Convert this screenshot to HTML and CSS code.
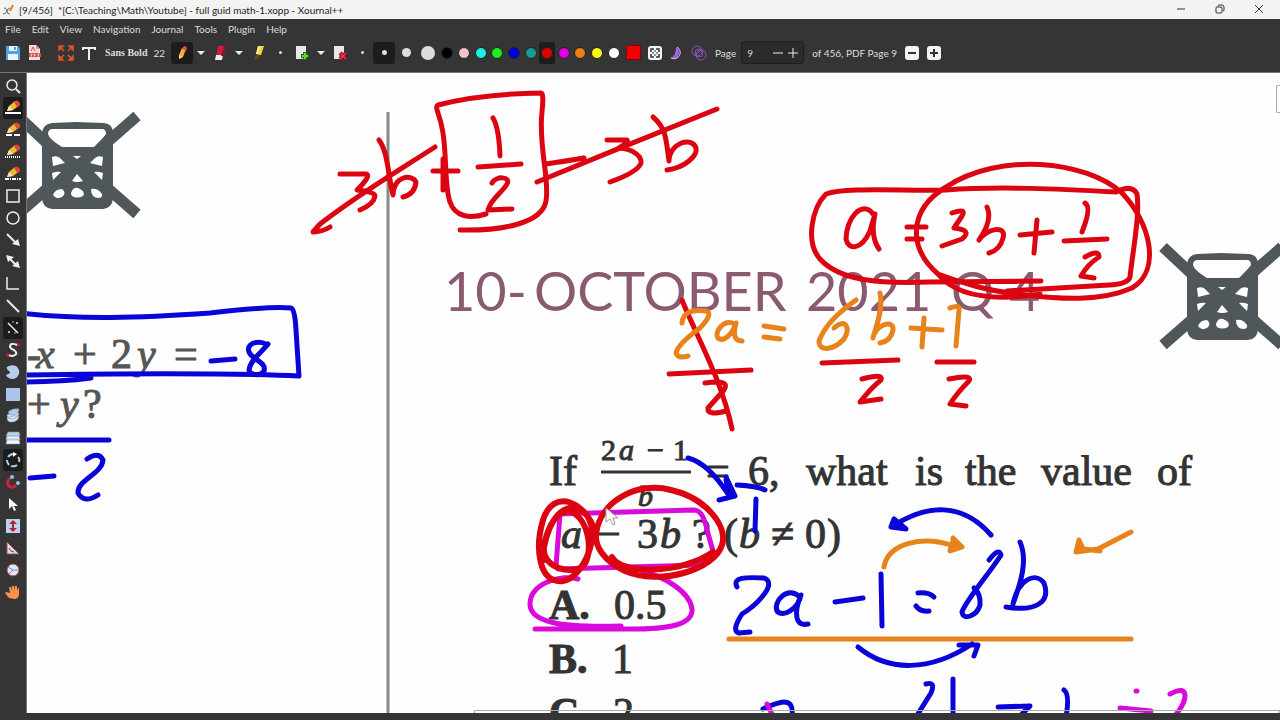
FILE: index.html
```
<!DOCTYPE html>
<html lang="en">

<head>
    <meta charset="UTF-8">
    <meta name="viewport" content="width=device-width, initial-scale=1.0">
    <title>[9/456] full guid math-1.xopp - Xournal++</title>
    <link rel="stylesheet" href="styles.css">
</head>

<body>
    <header class="titlebar">
        <svg class="app-icon" viewBox="0 0 12 12"><path d="M1 4q2-1 3 3t3 3M7 4q-2 0-3 3t-4 3" fill="none" stroke="#666"/><path d="M7 7l3-6" stroke="#f07b1c" stroke-width="2"/></svg>
        <span class="window-title">[9/456]&nbsp; *[C:\Teaching\Math\Youtube] - full guid math-1.xopp - Xournal++</span>
        <div class="window-buttons">
            <button aria-label="Minimize"><svg viewBox="0 0 10 10"><path d="M1 5h8"/></svg></button>
            <button aria-label="Restore"><svg viewBox="0 0 10 10"><rect x="1" y="3" width="6" height="6" rx="1"/><path d="M3 2q0-1 1-1h3q2 0 2 2v3q0 1-1 1"/></svg></button>
            <button aria-label="Close"><svg viewBox="0 0 10 10"><path d="M1 1l8 8M9 1L1 9"/></svg></button>
        </div>
    </header>

    <nav class="menubar">
        <button>File</button>
        <button>Edit</button>
        <button>View</button>
        <button>Navigation</button>
        <button>Journal</button>
        <button>Tools</button>
        <button>Plugin</button>
        <button>Help</button>
    </nav>

    <div class="toolbar">
        <button class="tool" aria-label="Save"><svg viewBox="0 0 16 16"><path d="M1 1h12l2 2v12H1z" fill="#4ba3ee"/><path d="M4 1h8v5H4zM3 9h10v6H3z" fill="#eef5fb"/><path d="M9 2h2v3H9z" fill="#4ba3ee"/></svg></button>
        <button class="tool" aria-label="Export PDF"><svg viewBox="0 0 16 16"><path d="M2 0h7l4 4v11H2z" fill="#f3dede"/><path d="M9 0v4h4" fill="#c99"/><path d="M2 8h12v4H2z" fill="#d8454c"/><path d="M4 12V9h1v1H4M7 9v2h1V9zM11 12V9h2M11 10h1" stroke="#fff" stroke-width=".6" fill="none"/><path d="M4 6l2-4 2 4" stroke="#d8454c" fill="none"/></svg></button>
        <button class="tool fullscreen" aria-label="Fullscreen"><svg viewBox="0 0 16 16" fill="#e0532a" stroke="#e0532a" stroke-width="1.5"><path d="M1 1h4L1 5zM15 1h-4l4 4zM1 15h4l-4-4zM15 15h-4l4-4z"/><path d="M2 2l4 4M14 2l-4 4M2 14l4-4M14 14l-4-4"/></svg></button>
        <button class="tool" aria-label="Text"><svg viewBox="0 0 16 16"><path d="M3 5V3h12v2M9 3v12" fill="none" stroke="#eee" stroke-width="2"/></svg></button>
        <button class="font-button"><b>Sans Bold</b><span>22</span></button>
        <button class="tool active" aria-label="Pen"><svg viewBox="0 0 16 16"><path d="M5 14V10l3-7 4 1-3 8z" fill="#f5b32f"/><path d="M8 4q1-3 3-3 3 1 1 5z" fill="#e34f3a"/><path d="M5 14v-4l3 2z" fill="#f6e1b4"/></svg></button>
        <button class="arrow" aria-label="Pen options"></button>
        <button class="tool" aria-label="Eraser"><svg viewBox="0 0 16 16"><path d="M6 1h8l-3 10H4z" fill="#d31d38"/><path d="M4 10h7l-1 5H3z" fill="#eee"/><path d="M12 1h2l-3 10H9z" fill="#8d1224"/></svg></button>
        <button class="arrow" aria-label="Eraser options"></button>
        <button class="tool" aria-label="Highlighter"><svg viewBox="0 0 16 16"><path d="M8 1h6l-3 9H6z" fill="#f7d63c"/><path d="M6 9l5 1-3 3-1 2H4z" fill="#5c4725"/><path d="M8 1h2L8 9H6z" fill="#fff0a0"/></svg></button>
        <button class="tool" aria-label="Separator"><i class="size size-1"></i></button>
        <button class="tool" aria-label="Insert page"><svg viewBox="0 0 16 16"><path d="M2 1h10v13H2z" fill="#e8e8e4"/><path d="M11 7v8M7 11h8" stroke="#246b16" stroke-width="4"/><path d="M11 8v6M8 11h6" stroke="#67d63a" stroke-width="2"/></svg></button>
        <button class="arrow" aria-label="Page options"></button>
        <button class="tool" aria-label="Delete page"><svg viewBox="0 0 16 16"><path d="M2 1h10v13H2z" fill="#e8e8e4"/><path d="M8 8l6 6M14 8l-6 6" stroke="#8d0d20" stroke-width="4"/><path d="M8 8l6 6M14 8l-6 6" stroke="#f0375a" stroke-width="1.5"/></svg></button>
        <button class="tool" aria-label="Very fine"><i class="size size-1"></i></button>
        <button class="tool active" aria-label="Fine"><i class="size size-2"></i></button>
        <button class="tool" aria-label="Medium"><i class="size size-3"></i></button>
        <button class="tool" aria-label="Thick"><i class="size size-4"></i></button>
        <div class="colors">
            <button class="black" aria-label="Black"></button>
            <button class="pink" aria-label="Pink"></button>
            <button class="cyan" aria-label="Cyan"></button>
            <button class="green" aria-label="Green"></button>
            <button class="blue" aria-label="Blue"></button>
            <button class="teal" aria-label="Teal"></button>
            <button class="red active" aria-label="Red"></button>
            <button class="magenta" aria-label="Magenta"></button>
            <button class="orange" aria-label="Orange"></button>
            <button class="yellow" aria-label="Yellow"></button>
            <button class="white" aria-label="White"></button>
        </div>
        <button class="tool" aria-label="Select color"><i class="swatch"></i></button>
        <button class="tool" aria-label="Fit page"><svg viewBox="0 0 16 16"><rect x="1" y="1" width="14" height="14" rx="3" fill="#f4f4f4"/><path d="M4 7V4h3M9 4h3v3M12 9v3H9M7 12H4V9" fill="none" stroke="#333" stroke-width="1.5"/><path d="M8 5v6M5 8h6" stroke="#333"/><path d="M7 7h2v2H7z" fill="#f4f4f4"/></svg></button>
        <button class="tool" aria-label="Fill"><svg viewBox="0 0 16 16"><path d="M7 2a6 6 0 1 1-6 11q6-1 6-11" fill="#a063da"/><path d="M8 2a6 6 0 1 1-6 11" fill="none" stroke="#d8b8f4"/></svg></button>
        <button class="tool" aria-label="Shape recognizer"><svg viewBox="0 0 16 16" fill="none" stroke="#9150bd"><circle cx="6" cy="6" r="5"/><circle cx="10" cy="10" r="5"/><circle cx="8" cy="8" r="4"/><path d="M5 10l6-6"/></svg></button>
        <label class="page-label" for="page">Page</label>
        <div class="spin">
            <input id="page" type="text" value="9">
            <button aria-label="Previous page"><svg viewBox="0 0 10 10"><path d="M0 5h10"/></svg></button>
            <button aria-label="Next page"><svg viewBox="0 0 10 10"><path d="M0 5h10M5 0v10"/></svg></button>
        </div>
        <span class="page-count">of 456, PDF Page 9</span>
        <button class="tool" aria-label="Zoom out"><svg viewBox="0 0 16 16"><rect x="1" y="1" width="14" height="14" rx="3" fill="#f4f4f4"/><path d="M4 8h8" stroke="#333" stroke-width="2"/></svg></button>
        <button class="tool" aria-label="Zoom in"><svg viewBox="0 0 16 16"><rect x="1" y="1" width="14" height="14" rx="3" fill="#f4f4f4"/><path d="M4 8h8M8 4v8" stroke="#333" stroke-width="2"/></svg></button>
    </div>

    <svg class="defs">
        <!-- pencil shared by the line style buttons -->
        <symbol id="pencil" viewBox="0 0 16 16">
            <path d="M2 11l2-5 6-5 5 4-7 5z" fill="#f4b43c"/>
            <path d="M9 2q3-3 5 0 2 1 0 4l-2 1z" fill="#e4492f"/>
            <path d="M2 11l2-5 4 4z" fill="#f7e3bb"/>
        </symbol>
        <symbol id="chair" viewBox="0 0 160 230" overflow="visible">
            <path d="M18 116l32 30M137 116l-32 28M18 214l32-28M137 214l-32-28" stroke="#50575a" stroke-width="11" fill="none"/>
            <path d="M42 133q1-9 10-10l24-1 28 1q9 1 9 10v66q-1 9-10 10H52q-9-1-10-10z" fill="#50575a"/>
            <path d="M53 129h49q4 0 4 5-1 2-12 13H62Q49 139 48 134q0-5 5-5M52 157q5-2 8 1l5 5-12 3zM103 157q-5-2-8 1l-5 5 12 3zM73 156h8l-4 3zM52 173q5-2 9-1l-8 8zM103 173q-5-2-9-1l8 8zM72 181l5-7 6 7q-6 2-11 0M53 195q2-6 9-6 5 4 0 8-6 3-9-2M71 193q2-6 7-5 8 3 5 8-6 3-11 0-1-1-1-3M91 189q7-1 11 5 1 3-3 4-8 0-8-9" fill="#fff"/>
        </symbol>
    </svg>

    <div class="workspace">
        <aside class="sidebar">
            <button aria-label="Zoom"><svg viewBox="0 0 16 16" fill="none" stroke="#eee"><circle cx="7" cy="7" r="5" stroke-width="1.5"/><path d="M11 11l4 4" stroke-width="2"/></svg></button>
            <button class="active" aria-label="Solid line"><svg viewBox="0 0 16 16"><use href="#pencil"/><path d="M0 13h16" stroke="#fff" stroke-width="2"/></svg></button>
            <button aria-label="Dashed line"><svg viewBox="0 0 16 16"><use href="#pencil"/><path d="M1 13h14" stroke="#fff" stroke-width="2" stroke-dasharray="6 2"/></svg></button>
            <button aria-label="Dotted line"><svg viewBox="0 0 16 16"><use href="#pencil"/><path d="M0 13h16" stroke="#fff" stroke-width="2" stroke-dasharray="1 1"/></svg></button>
            <button aria-label="Dash-dot line"><svg viewBox="0 0 16 16"><use href="#pencil"/><path d="M0 13h16" stroke="#fff" stroke-width="2" stroke-dasharray="4 1 1 1"/></svg></button>
            <button aria-label="Rectangle"><svg viewBox="0 0 16 16"><rect x="2" y="2" width="12" height="12" fill="none" stroke="#eee" stroke-width="1.5"/></svg></button>
            <button aria-label="Ellipse"><svg viewBox="0 0 16 16"><circle cx="8" cy="8" r="6" fill="none" stroke="#eee" stroke-width="1.5"/></svg></button>
            <button aria-label="Arrow"><svg viewBox="0 0 16 16"><path d="M2 2l9 9" stroke="#eee" stroke-width="2"/><path d="M15 14l-8-2 6-5z" fill="#eee"/></svg></button>
            <button aria-label="Double arrow"><svg viewBox="0 0 16 16"><path d="M4 4l7 7" stroke="#eee" stroke-width="2"/><path d="M15 14l-8-2 6-5zM1 1l8 2-6 5z" fill="#eee"/></svg></button>
            <button aria-label="Coordinate axes"><svg viewBox="0 0 16 16"><path d="M2 1v12h12" fill="none" stroke="#eee" stroke-width="1.5"/></svg></button>
            <button aria-label="Line"><svg viewBox="0 0 16 16"><path d="M2 2l12 12" stroke="#eee" stroke-width="2"/></svg></button>
            <button class="active" aria-label="Shape snapping"><svg viewBox="0 0 16 16" fill="#eee"><path d="M3 3l10 10" stroke="#eee" stroke-width="1.5"/><circle cx="12" cy="3" r="1"/><circle cx="4" cy="12" r="1"/><circle cx="8" cy="2" r=".7"/><circle cx="10" cy="13" r=".7"/></svg></button>
            <button aria-label="Spline"><svg viewBox="0 0 16 16"><circle cx="13" cy="3" r="2" fill="#c5132b"/><circle cx="3" cy="13" r="2" fill="#c5132b"/><path d="M12 3Q5 0 5 5q1 2 4 3 4 3 1 5-3 2-6 0" fill="none" stroke="#eee" stroke-width="2"/></svg></button>
            <button aria-label="Lasso select"><svg viewBox="0 0 16 16"><path d="M2 3q4-3 9-1 4 3 3 8-2 5-7 5-5-1-6-4 6-2 3-4T2 3" fill="#b5cdee"/></svg></button>
            <button aria-label="Rectangle select"><svg viewBox="0 0 16 16"><path d="M1 2h14v13H1z" fill="#aac6ea"/></svg></button>
            <button aria-label="Lasso layers"><svg viewBox="0 0 16 16" fill="#dfe9f4" stroke="#7f9dbb" stroke-width=".7"><path d="M2 10q5-3 12-2-1 6-8 6-4 0-4-4M2 7q5-3 12-2-1 6-8 6-4 0-4-4"/><path d="M4 3q5-3 10-2-1 6-6 6-6 0-4-4" fill="#b4cdeb"/></svg></button>
            <button aria-label="Rectangle layers"><svg viewBox="0 0 16 16" stroke="#8298ad" stroke-width=".6"><path d="M2 9h12l1 5H1zM2 6h12l1 4H1z" fill="#f4f7fa"/><path d="M3 2h11l1 4H1z" fill="#b8d0eb"/></svg></button>
            <button class="active" aria-label="Rotation snapping"><svg viewBox="0 0 16 16" fill="none" stroke="#a6cff2" stroke-width="2"><path d="M3 5q2-3 6-3M2 8q0 3 2 5M6 14q4 1 6-1M14 10q1-3-1-5"/><path d="M8 0l4 2-4 3z" fill="#fff" stroke="none"/></svg></button>
            <button aria-label="Grid snapping"><svg viewBox="0 0 16 16"><path d="M6 4q-6 4-2 8 4 3 7-1" fill="none" stroke="#c4263a" stroke-width="3"/><circle cx="7" cy="3" r="2" fill="#94c3ed"/><circle cx="13" cy="9" r="2" fill="#94c3ed"/></svg></button>
            <button aria-label="Select object"><svg viewBox="0 0 16 16"><path d="M4 2v11l3-3 2 5 2-1-2-4h4z" fill="#fff"/></svg></button>
            <button aria-label="Vertical space"><svg viewBox="0 0 16 16"><path d="M1 1h14v14H1z" fill="#bcd3ec"/><path d="M8 2l4 4h-3v4h3l-4 4-4-4h3V6H4z" fill="#bb2038"/></svg></button>
            <button aria-label="Set square"><svg viewBox="0 0 16 16"><path d="M2 2v12h12z" fill="#d7e3f2" stroke="#b64257"/><path d="M4 8q1 4 5 4" fill="none" stroke="#456"/></svg></button>
            <button aria-label="Compass"><svg viewBox="0 0 16 16"><circle cx="8" cy="8" r="6" fill="#dce8f7" stroke="#b64257"/><path d="M3 5l5 3h6M8 8l-4 4" fill="none" stroke="#6b96c4"/></svg></button>
            <button aria-label="Hand"><svg viewBox="0 0 16 16"><path d="M4 14L0 9l1-1 4 1-1-6h2l1 4V2h2v5l1-5h2v5l1-3h1v6q0 5-5 5z" fill="#ff914d"/></svg></button>
        </aside>

        <main class="canvas">
            <svg class="page" viewBox="27 73 1253 640" preserveAspectRatio="xMinYMin slice">
                <!-- printed sheet -->
                <path d="M388 112V714" stroke="#888" stroke-width="3"/>
                <use href="#chair" width="160" height="230"/>
                <use href="#chair" x="1145" y="131" width="160" height="230"/>
                <g class="heading">
                    <text x="444" y="311">10-</text>
                    <text x="534" y="311">OCTOBER</text>
                    <text x="806" y="311">2021</text>
                    <text x="951" y="311">Q</text>
                    <text x="1009" y="311">4</text>
                </g>
                <g class="print faded">
                    <text x="27" y="368">-</text>
                    <text x="36" y="368" class="var">x</text>
                    <text x="73" y="368">+</text>
                    <text x="111" y="368">2</text>
                    <text x="137" y="368" class="var">y</text>
                    <text x="174" y="368">=</text>
                    <text x="27" y="418">+</text>
                    <text x="60" y="418" class="var">y</text>
                    <text x="83" y="418">?</text>
                </g>
                <g class="print">
                    <text x="549" y="485">If</text>
                    <g class="fraction">
                        <text x="601" y="460">2</text>
                        <text x="619" y="460" class="var">a</text>
                        <text x="647" y="460">−</text>
                        <text x="673" y="460">1</text>
                        <text x="638" y="506" class="var">b</text>
                    </g>
                    <path d="M601 472H691"/>
                    <text x="706" y="485">=</text>
                    <text x="748" y="485">6,</text>
                    <text x="806" y="485">what</text>
                    <text x="915" y="485">is</text>
                    <text x="965" y="485">the</text>
                    <text x="1041" y="485">value</text>
                    <text x="1157" y="485">of</text>
                    <text x="561" y="548" class="var">a</text>
                    <text x="597" y="548">−</text>
                    <text x="637" y="548">3</text>
                    <text x="660" y="548" class="var">b</text>
                    <text x="692" y="548">?</text>
                    <text x="724" y="548">(</text>
                    <text x="739" y="548" class="var">b</text>
                    <text x="771" y="548">≠</text>
                    <text x="805" y="548">0</text>
                    <text x="827" y="548">)</text>
                    <text x="549" y="619" class="option">A.</text>
                    <text x="614" y="619">0.5</text>
                    <text x="549" y="673" class="option">B.</text>
                    <text x="612" y="673">1</text>
                    <text x="549" y="727" class="option">C.</text>
                    <text x="613" y="727">2</text>
                </g>

                <!-- pen strokes -->
                <g class="ink ink-magenta">
                    <path d="M560 514L556 566M558 514L694 510Q703 510 707 530L713 551Q712 560 700 565L558 569"/>
                    <path d="M578 579C562 574 530 583 530 604C530 622 560 628 621 626M535 629H620C672 630 693 624 692 609C690 592 664 576 643 572"/>
                </g>
                <g class="ink ink-red">
                    <path d="M486 214C470 219 455 217 450 202C444 186 447 148 442 128C440 115 434 107 438 105Q480 94 541 93Q544 93 542 112C538 145 550 180 546 201C542 224 500 231 460 230"/>
                    <path d="M493 118Q499 128 500 156M478 167L521 164M492 183C496 176 511 176 507 184C503 192 491 198 488 210L512 209"/>
                    <path d="M433 171H458M443 159V190"/>
                    <path d="M340 174H366Q372 175 357 190Q375 192 375 196Q374 204 360 210"/>
                    <path d="M379 140C388 152 388 175 393 195C394 175 412 174 416 182Q415 194 403 197"/>
                    <path d="M435 147C390 176 360 193 320 224L313 232Q322 232 330 227"/>
                    <path d="M546 164L584 158L560 162M537 182C605 154 640 140 717 109"/>
                    <path d="M607 140H627Q629 142 619 148C634 149 642 157 641 163Q638 172 610 182"/>
                    <path d="M653 117C666 128 666 138 669 161C669 143 692 136 696 148C698 156 684 168 667 170"/>
                    <path d="M1007 291L1109 285Q1128 284 1130 277C1133 250 1140 214 1137 194Q1132 184 1116 192C1060 189 1000 186 946 190C900 191 845 187 826 194C812 208 805 242 820 259C840 281 880 284 930 282L1041 281"/>
                    <path d="M873 214C862 199 846 219 846 239C848 250 861 251 870 231L875 214Q870 236 879 249"/>
                    <path d="M907 227H926M907 239H922"/>
                    <path d="M938 274C908 248 908 210 946 187C999 152 1085 160 1122 193C1150 222 1162 270 1132 288C1100 302 1060 299 1025 295C985 291 960 282 938 274C955 295 988 302 1040 294"/>
                    <path d="M952 213Q967 208 962 216L954 228Q973 230 962 239L942 246"/>
                    <path d="M987 207Q993 220 979 240C986 229 1007 224 1003 238Q1000 250 989 253"/>
                    <path d="M1020 235L1052 232M1037 220L1034 253M1085 203Q1092 207 1082 232M1064 241L1107 239M1085 257Q1099 249 1099 257Q1088 264 1081 276L1094 278"/>
                    <path d="M682 300C695 333 722 380 732 429M669 374L751 370M705 383Q731 379 724 390L708 408Q707 416 726 411"/>
                    <path d="M822 363L898 360M862 379Q884 373 881 380Q872 387 860 402L881 399M937 362H974M949 379Q973 374 969 381Q957 393 950 404L966 406"/>
                    <path d="M596 534C586 500 553 488 543 520C535 547 538 584 563 581C583 578 604 532 584 512C564 500 550 518 544 547C541 567 572 576 583 566C593 556 591 520 570 511C551 511 542 542 544 560" class="thick"/>
                    <path d="M596 534C600 500 639 481 671 490C706 498 728 526 722 545C714 570 660 586 625 571C602 560 595 545 596 534M612 557C620 574 680 575 713 552" class="thick"/>
                </g>
                <g class="ink ink-orange">
                    <path d="M682 323Q683 308 706 311Q714 313 700 328Q678 344 676 353Q678 359 688 356"/>
                    <path d="M735 324C723 318 714 333 718 338C724 343 733 333 736 323Q731 341 742 341M764 326L784 329M764 337L780 339"/>
                    <path d="M856 300C838 313 825 325 819 341C819 353 835 349 844 339C851 329 846 317 834 328M880 293C884 310 874 332 873 338C876 324 894 319 893 330Q891 341 880 343"/>
                    <path d="M911 328L942 330M924 318L922 347M950 308Q960 304 959 310L956 346"/>
                    <path d="M884 567C888 543 923 535 954 546"/>
                    <path d="M953 538L962 547L950 551L953 541M1131 532L1098 549L1076 552L1079 540L1083 549L1100 551L1098 549" fill="#e8821a"/>
                    <path d="M729 639H1131"/>
                </g>
                <g class="ink ink-blue">
                    <path d="M20 313C80 320 140 318 210 313Q270 306 291 308Q295 309 296 330L299 376Q210 372 20 375M20 382Q60 382 91 378"/>
                    <path d="M211 361L235 359M266 344C256 340 246 344 249 352C252 360 267 362 264 371C261 376 250 376 249 370C250 360 262 352 268 344"/>
                    <path d="M20 440L109 440M30 478L54 476M87 459Q99 451 103 460C102 474 77 480 78 493Q84 504 98 495"/>
                    <path d="M688 458Q708 463 728 494M726 477L735 496L719 500M726 480L729 494M737 485Q757 486 765 490M756 499L755 531"/>
                    <path d="M991 535C962 502 927 504 893 526"/>
                    <path d="M894 519L891 527L906 529z" fill="#0a04d8"/>
                    <path d="M737 587C732 577 746 577 764 578C778 583 758 604 742 614Q731 631 739 633L750 632"/>
                    <path d="M800 597C787 585 773 602 777 611C783 618 798 609 801 595Q795 609 797 618Q799 626 808 624"/>
                    <path d="M835 602L863 598M881 574L882 626M918 593Q929 592 934 597M916 606Q920 612 929 611"/>
                    <path d="M989 560Q999 547 1001 555C989 574 966 600 962 612C963 621 977 616 980 605Q981 594 974 588"/>
                    <path d="M1020 542C1028 560 1021 582 1013 604C1018 580 1035 571 1044 583C1051 602 1036 612 1006 607"/>
                    <path d="M858 647C888 672 930 672 972 644M959 645H978L974 656"/>
                    <path d="M763 709C774 704 795 693 792 716M926 684Q936 681 931 693L916 717M953 679V717M998 707L1030 706L1018 718M1064 690Q1070 694 1066 717"/>
                </g>
                <g class="ink ink-magenta">
                    <path d="M767 704L773 716M1136 691h1M1120 708L1151 711M1170 694Q1185 686 1185 696Q1185 704 1174 717"/>
                </g>
                <path d="M606 508v14l4-3 3 6 2-1-2-6h5z" fill="#fff" stroke="#999"/>
            </svg>
            <i class="scroll-v"></i>
            <i class="scroll-h"></i>
        </main>
    </div>
    <footer class="statusbar"></footer>
</body>

</html>
```
FILE: styles.css
```
* {
    box-sizing: border-box;
}

body {
    display: flex;
    flex-direction: column;
    height: 100vh;
    margin: 0;
    overflow: hidden;
    background: #353535;
    color: #ddd;
    font-family: Lato, "Open Sans", sans-serif;
    font-size: 10px;
}

button {
    padding: 0;
    border: 0;
    background: none;
    color: inherit;
    font: inherit;
}

.defs {
    position: absolute;
    width: 0;
    height: 0;
}

.titlebar {
    display: flex;
    align-items: center;
    height: 19px;
    padding-left: 3px;
    background: #f3f3f3;
    color: #222;
}

.app-icon {
    width: 12px;
    height: 12px;
    margin-right: 4px;
}

.window-buttons {
    display: flex;
    margin-left: auto;
    margin-right: 2px;
}

.window-buttons button {
    width: 39px;
    height: 19px;
}

.window-buttons svg {
    width: 10px;
    height: 10px;
    fill: none;
    stroke: #333;
}

.menubar {
    display: flex;
    align-items: center;
    gap: 11px;
    height: 20px;
    padding-left: 5px;
}

.toolbar {
    display: flex;
    align-items: center;
    height: 34px;
    padding: 0 0 6px 2px;
    border-bottom: 1px solid #777;
}

.tool {
    display: flex;
    align-items: center;
    justify-content: center;
    flex: none;
    width: 22px;
    height: 22px;
    border-radius: 3px;
}

.tool svg {
    width: 16px;
    height: 16px;
}

.fullscreen {
    margin-left: 9px;
}

.active {
    background: #1c1c1c;
}

.font-button {
    display: flex;
    align-items: center;
    justify-content: center;
    gap: 6px;
    width: 72px;
}

.font-button b {
    font-family: "Liberation Serif", serif;
    font-size: 10px;
}

.arrow {
    width: 16px;
    height: 22px;
}

.arrow::before {
    content: "";
    display: block;
    width: 0;
    margin: auto;
    border: 4px solid transparent;
    border-top-color: #eee;
    border-bottom: 0;
}

.size {
    border-radius: 50%;
    background: #ddd;
}

.size-1 {
    width: 3px;
    height: 3px;
}

.size-2 {
    width: 5px;
    height: 5px;
}

.size-3 {
    width: 9px;
    height: 9px;
}

.size-4 {
    width: 14px;
    height: 14px;
}

.colors {
    display: flex;
    flex: none;
    width: 183px;
}

.colors button {
    flex: 1;
    height: 22px;
    border-radius: 3px;
}

.colors button::before {
    content: "";
    display: block;
    width: 10px;
    height: 10px;
    margin: auto;
    border: 1px solid #222;
    border-radius: 50%;
    background: currentColor;
}

.colors .black { color: #000; }
.colors .pink { color: #f0c4c4; }
.colors .cyan { color: #1df0e0; }
.colors .green { color: #1eec1e; }
.colors .blue { color: #0000e0; }
.colors .teal { color: #189a90; }
.colors .red { color: #e00000; }
.colors .magenta { color: #e000e0; }
.colors .orange { color: #ee7d18; }
.colors .yellow { color: #f8f818; }
.colors .white { color: #fff; }

.swatch {
    width: 15px;
    height: 15px;
    border: 1px solid #8c0000;
    background: #f00000;
}

.page-label {
    margin: 0 5px;
}

.spin {
    display: flex;
    align-items: center;
    width: 63px;
    height: 23px;
    padding-right: 3px;
    border: 1px solid #1e1e1e;
    border-radius: 3px;
    background: #2b2b2b;
}

.spin input {
    width: 29px;
    padding: 0 0 0 5px;
    border: 0;
    background: none;
    color: #ddd;
    font: inherit;
}

.spin button {
    display: flex;
    align-items: center;
    justify-content: center;
    width: 15px;
    height: 20px;
}

.spin svg {
    width: 10px;
    height: 10px;
    stroke: #eee;
}

.page-count {
    margin: 0 4px 0 8px;
}

.workspace {
    display: flex;
    flex: 1;
    min-height: 0;
}

.sidebar {
    display: flex;
    flex-direction: column;
    width: 27px;
    padding: 2px 3px 0 3px;
    border-right: 1px solid #777;
}

.sidebar button {
    display: flex;
    align-items: center;
    justify-content: center;
    height: 22px;
    border-radius: 3px;
}

.sidebar svg {
    width: 16px;
    height: 16px;
}

.canvas {
    position: relative;
    flex: 1;
    overflow: hidden;
    background: #fefefe;
}

.page {
    display: block;
    width: 100%;
    height: 100%;
}

.heading {
    fill: #8a5a70;
    font-family: Lato, sans-serif;
    font-size: 54px;
}

.print {
    fill: #333;
    stroke: #333;
    stroke-width: 1px;
    font-family: "Liberation Serif", serif;
    font-size: 42px;
}

.print path {
    stroke-width: 3px;
}

.faded {
    fill: #555;
    stroke: #555;
}

.fraction {
    font-size: 30px;
}

.var {
    font-style: italic;
}

.option {
    font-weight: bold;
}

.ink {
    fill: none;
    stroke-width: 5px;
    stroke-linecap: round;
    stroke-linejoin: round;
}

.ink-red {
    stroke: #dc0410;
}

.ink-blue {
    stroke: #0a04d8;
}

.ink-orange {
    stroke: #e8821a;
}

.ink-magenta {
    stroke: #d80adc;
}

.thick {
    stroke-width: 6px;
}

.scroll-v {
    position: absolute;
    top: 12px;
    right: 0;
    width: 4px;
    height: 28px;
    border: 1px solid #aaa;
    border-right: 0;
    border-radius: 2px 0 0 2px;
}

.scroll-h {
    position: absolute;
    right: 0;
    bottom: 0;
    left: 447px;
    height: 3px;
    border: 1px solid #aaa;
    border-bottom: 0;
}

.statusbar {
    height: 7px;
}
```
